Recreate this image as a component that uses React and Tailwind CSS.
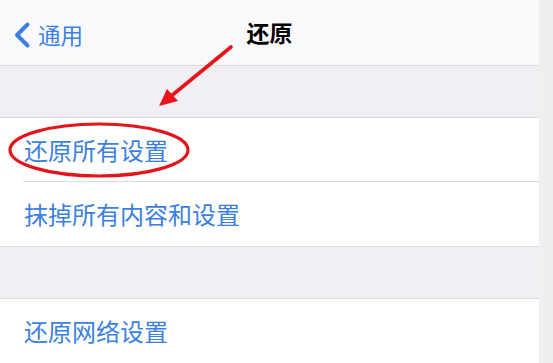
const font = { fontFamily: '"Noto Sans CJK SC", "Noto Sans", sans-serif' }

function Row({ children, inset }) {
  return (
    <div className="relative h-[64px] flex items-center pl-[24px] bg-white">
      <span className="text-[24px] leading-none text-[#3b7fe0]">{children}</span>
      {inset && <div className="absolute left-[23px] right-0 bottom-0 h-px bg-[#dcdce0]" />}
    </div>
  )
}

export default function App() {
  return (
    <div className="w-[553px] h-[363px] bg-[#efefef] flex overflow-hidden" style={font}>
      <div className="relative w-[539px] flex flex-col bg-[#efeff4]">
        <div className="h-[66px] shrink-0 bg-[#f9f9fb] border-b border-[#dcdce0] relative flex items-center">
          <div className="flex items-center pl-[12px] gap-[6px] pt-[4px]">
            <svg width="20" height="28" viewBox="0 0 20 28">
              <path d="M15.5 3.5 L5 14 L15.5 24.5" fill="none" stroke="#3b7fe0" strokeWidth="4" strokeLinecap="round" strokeLinejoin="round" />
            </svg>
            <span className="text-[22.5px] leading-none text-[#3b7fe0]">通用</span>
          </div>
          <div className="absolute left-0 right-0 top-0 h-[66px] flex items-center justify-center pointer-events-none">
            <span className="text-[23px] leading-none font-semibold text-black pb-[1px]">还原</span>
          </div>
        </div>
        <div className="h-[51px] shrink-0" />
        <div className="border-t border-b border-[#dcdce0] shrink-0">
          <Row inset>还原所有设置</Row>
          <Row>抹掉所有内容和设置</Row>
        </div>
        <div className="h-[51px] shrink-0" />
        <div className="border-t border-b border-[#dcdce0] shrink-0">
          <Row>还原网络设置</Row>
        </div>
        <svg className="absolute left-0 top-0 pointer-events-none" width="539" height="363" viewBox="0 0 539 363">
          <ellipse cx="99" cy="150" rx="89" ry="26" fill="none" stroke="#e3141c" strokeWidth="3.2" />
          <line x1="231" y1="47" x2="170" y2="97" stroke="#e8141b" strokeWidth="3.6" strokeLinecap="round" />
          <polygon points="159,106 167,89 178,101" fill="#e8141b" />
        </svg>
      </div>
    </div>
  )
}
